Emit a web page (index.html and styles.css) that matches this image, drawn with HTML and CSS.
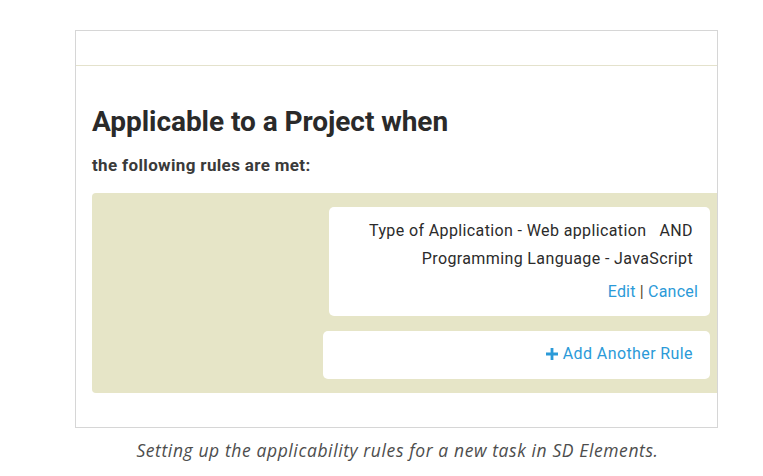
FILE: index.html
```html
<!DOCTYPE html>
<html>
<head>
<meta charset="utf-8">
<link rel="stylesheet" href="styles.css">
</head>
<body>
<div class="frame">
  <div class="topbar"></div>
  <div class="content">
    <h1 class="title">Applicable to a Project when</h1>
    <p class="subtitle">the following rules are met:</p>
    <div class="panel">
      <div class="card rule-card">
        <div class="rule-line">Type of Application - Web application &nbsp;&nbsp;AND</div>
        <div class="rule-line">Programming Language - JavaScript</div>
        <div class="actions"><span class="link">Edit</span> <span class="sep">|</span> <span class="link">Cancel</span></div>
      </div>
      <div class="card add-card">
        <span class="link add-link"><svg class="plus" viewBox="0 0 12 12" width="12" height="12"><path d="M4.6 0h2.8v4.6H12v2.8H7.4V12H4.6V7.4H0V4.6h4.6z" fill="currentColor"/></svg> Add Another Rule</span>
      </div>
    </div>
  </div>
</div>
<p class="caption">Setting up the applicability rules for a new task in SD Elements.</p>
</body>
</html>
```
FILE: styles.css
```css
html, body {
  margin: 0;
  padding: 0;
  background: #ffffff;
}
body {
  font-family: Roboto, "Liberation Sans", Arial, sans-serif;
  color: #2b2b2b;
}
.frame {
  margin: 30px 0 0 75px;
  width: 641px;
  height: 396px;
  border: 1px solid #d6d6d6;
  overflow: hidden;
}
.topbar {
  height: 34px;
  border-bottom: 1px solid #e4e2cc;
}
.content {
  padding: 40px 0 0 16px;
}
.title {
  margin: 0;
  font-size: 28px;
  line-height: 32px;
  font-weight: 700;
  color: #2a2a2a;
  letter-spacing: -0.05px;
}
.subtitle {
  margin: 17px 0 0 0;
  font-size: 17px;
  line-height: 20px;
  font-weight: 700;
  color: #3a3a3a;
  letter-spacing: 0.35px;
}
.panel {
  margin-top: 18px;
  background: #e6e5c7;
  border-radius: 4px 0 0 4px;
  padding: 14px 7px 14px 0;
  display: flex;
  flex-direction: column;
  align-items: flex-end;
  gap: 15px;
}
.card {
  background: #ffffff;
  border-radius: 5px;
  text-align: right;
}
.rule-card {
  width: 381px;
  height: 109px;
  box-sizing: border-box;
  padding: 10px 17px 0 0;
  font-size: 16px;
  letter-spacing: 0.38px;
}
.rule-line {
  line-height: 28px;
  color: #2b2b2b;
}
.actions {
  margin-top: 5px;
  margin-right: -5px;
  line-height: 28px;
  font-size: 16px;
  letter-spacing: 0.2px;
}
.link {
  color: #2b9ad8;
}
.sep {
  color: #5a4a2a;
}
.add-card {
  width: 387px;
  height: 48px;
  box-sizing: border-box;
  padding: 11px 17px 0 0;
  font-size: 16px;
  line-height: 24px;
  letter-spacing: 0.4px;
}
.plus {
  vertical-align: -1px;
}
.caption {
  margin: 11px 0 0 0;
  width: 795px;
  text-align: center;
  font-family: "Open Sans", "Liberation Sans", sans-serif;
  font-style: italic;
  font-size: 17.5px;
  line-height: 22px;
  color: #4d4d4d;
  letter-spacing: 0.6px;
}
```
